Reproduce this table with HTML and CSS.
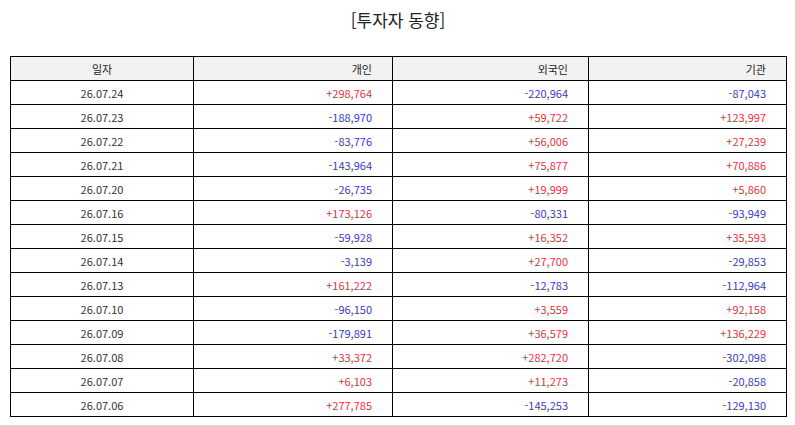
FILE: index.html
```html
<!DOCTYPE html>
<html lang="ko">
<head>
<meta charset="utf-8">
<title>투자자 동향</title>
<link rel="stylesheet" href="styles.css">
</head>
<body>
<div class="page">
  <h1 class="title">[투자자 동향]</h1>
  <table class="grid">
    <colgroup>
      <col class="c-date">
      <col class="c-ind">
      <col class="c-for">
      <col class="c-inst">
    </colgroup>
    <thead>
      <tr><th class="center">일자</th><th>개인</th><th>외국인</th><th>기관</th></tr>
    </thead>
    <tbody>
      <tr><td class="center">26.07.24</td><td class="up">+298,764</td><td class="down">-220,964</td><td class="down">-87,043</td></tr>
      <tr><td class="center">26.07.23</td><td class="down">-188,970</td><td class="up">+59,722</td><td class="up">+123,997</td></tr>
      <tr><td class="center">26.07.22</td><td class="down">-83,776</td><td class="up">+56,006</td><td class="up">+27,239</td></tr>
      <tr><td class="center">26.07.21</td><td class="down">-143,964</td><td class="up">+75,877</td><td class="up">+70,886</td></tr>
      <tr><td class="center">26.07.20</td><td class="down">-26,735</td><td class="up">+19,999</td><td class="up">+5,860</td></tr>
      <tr><td class="center">26.07.16</td><td class="up">+173,126</td><td class="down">-80,331</td><td class="down">-93,949</td></tr>
      <tr><td class="center">26.07.15</td><td class="down">-59,928</td><td class="up">+16,352</td><td class="up">+35,593</td></tr>
      <tr><td class="center">26.07.14</td><td class="down">-3,139</td><td class="up">+27,700</td><td class="down">-29,853</td></tr>
      <tr><td class="center">26.07.13</td><td class="up">+161,222</td><td class="down">-12,783</td><td class="down">-112,964</td></tr>
      <tr><td class="center">26.07.10</td><td class="down">-96,150</td><td class="up">+3,559</td><td class="up">+92,158</td></tr>
      <tr><td class="center">26.07.09</td><td class="down">-179,891</td><td class="up">+36,579</td><td class="up">+136,229</td></tr>
      <tr><td class="center">26.07.08</td><td class="up">+33,372</td><td class="up">+282,720</td><td class="down">-302,098</td></tr>
      <tr><td class="center">26.07.07</td><td class="up">+6,103</td><td class="up">+11,273</td><td class="down">-20,858</td></tr>
      <tr><td class="center">26.07.06</td><td class="up">+277,785</td><td class="down">-145,253</td><td class="down">-129,130</td></tr>
    </tbody>
  </table>
</div>
</body>
</html>
```

FILE: styles.css
```css
html, body {
  margin: 0;
  padding: 0;
  background: #ffffff;
}

.page {
  padding: 8px 9px 0 10px;
  display: flex;
  flex-direction: column;
  font-family: "Noto Sans CJK KR", "Noto Sans", sans-serif;
  color: #333333;
}

.title {
  margin: 0 0 24px 0;
  font-size: 17px;
  line-height: 24px;
  font-weight: normal;
  text-align: center;
  color: #222222;
}

.grid {
  width: 776px;
  border-collapse: collapse;
  table-layout: fixed;
  font-size: 11px;
}

.c-date { width: 183px; }
.c-ind { width: 199px; }
.c-for { width: 196px; }
.c-inst { width: 198px; }

.grid th,
.grid td {
  border: 1px solid #000000;
  height: 23px;
  padding: 0 20px 0 4px;
  line-height: 14px;
  text-align: right;
  font-weight: normal;
  color: #333333;
  box-sizing: border-box;
  height: 24px;
}

.grid th {
  background: #f2f2f2;
  color: #222222;
}

.grid .center {
  text-align: center;
  padding: 0;
}

.grid .up { color: #e2323c; }
.grid .down { color: #3a3ac4; }
```
